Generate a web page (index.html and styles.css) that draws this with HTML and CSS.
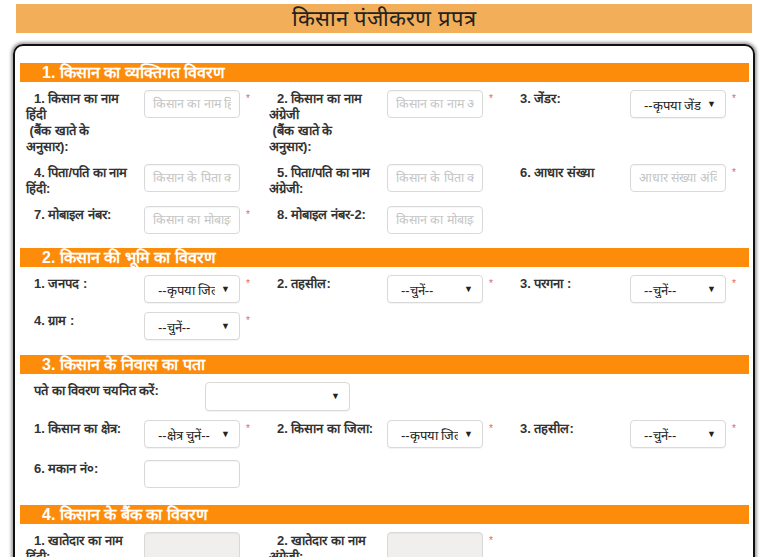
FILE: index.html
```html
<!DOCTYPE html>
<html lang="hi">
<head>
<meta charset="utf-8">
<title>किसान पंजीकरण प्रपत्र</title>
<link rel="stylesheet" href="styles.css">
</head>
<body>
<div class="title">किसान पंजीकरण प्रपत्र</div>
<div class="card">

  <div class="bar">1. किसान का व्यक्तिगत विवरण</div>
  <div class="row first">
    <div class="cell"><div class="lbl">1. किसान का नाम<br>हिंदी<br>&nbsp;(बैंक खाते के<br>अनुसार):</div><input class="inp" placeholder="किसान का नाम हिंदी में"><span class="req">*</span></div>
    <div class="cell"><div class="lbl">2. किसान का नाम<br>अंग्रेजी<br>&nbsp;(बैंक खाते के<br>अनुसार):</div><input class="inp" placeholder="किसान का नाम अंग्रेजी में"><span class="req">*</span></div>
    <div class="cell"><div class="lbl">3. जेंडर:</div><span class="sel"><select><option>--कृपया जेंडर चुनें--</option></select></span><span class="req">*</span></div>
  </div>
  <div class="row">
    <div class="cell"><div class="lbl">4. पिता/पति का नाम<br>हिंदी:</div><input class="inp" placeholder="किसान के पिता का नाम"></div>
    <div class="cell"><div class="lbl">5. पिता/पति का नाम<br>अंग्रेजी:</div><input class="inp" placeholder="किसान के पिता का नाम"></div>
    <div class="cell"><div class="lbl">6. आधार संख्या</div><input class="inp" placeholder="आधार संख्या अंकित करें"><span class="req">*</span></div>
  </div>
  <div class="row">
    <div class="cell"><div class="lbl">7. मोबाइल नंबर:</div><input class="inp" placeholder="किसान का मोबाइल नंबर"><span class="req">*</span></div>
    <div class="cell"><div class="lbl">8. मोबाइल नंबर-2:</div><input class="inp" placeholder="किसान का मोबाइल नंबर"></div>
    <div class="cell"></div>
  </div>

  <div class="bar next">2. किसान की भूमि का विवरण</div>
  <div class="row first">
    <div class="cell"><div class="lbl">1. जनपद :</div><span class="sel"><select><option>--कृपया जिला चुनें--</option></select></span><span class="req">*</span></div>
    <div class="cell"><div class="lbl">2. तहसील:</div><span class="sel"><select><option>--चुनें--</option></select></span><span class="req">*</span></div>
    <div class="cell"><div class="lbl">3. परगना :</div><span class="sel"><select><option>--चुनें--</option></select></span><span class="req">*</span></div>
  </div>
  <div class="row">
    <div class="cell"><div class="lbl">4. ग्राम :</div><span class="sel"><select><option>--चुनें--</option></select></span><span class="req">*</span></div>
    <div class="cell"></div>
    <div class="cell"></div>
  </div>

  <div class="bar next mid">3. किसान के निवास का पता</div>
  <div class="row first wide">
    <div class="cell"><div class="lbl lbl-wide">पते का विवरण चयनित करें:</div><span class="sel sel-wide"><select><option></option></select></span></div>
  </div>
  <div class="row">
    <div class="cell"><div class="lbl">1. किसान का क्षेत्र:</div><span class="sel"><select><option>--क्षेत्र चुनें--</option></select></span><span class="req">*</span></div>
    <div class="cell"><div class="lbl">2. किसान का जिला:</div><span class="sel"><select><option>--कृपया जिला चुनें--</option></select></span><span class="req">*</span></div>
    <div class="cell"><div class="lbl">3. तहसील:</div><span class="sel"><select><option>--चुनें--</option></select></span><span class="req">*</span></div>
  </div>
  <div class="row loose">
    <div class="cell"><div class="lbl">6. मकान नं०:</div><input class="inp"></div>
    <div class="cell"></div>
    <div class="cell"></div>
  </div>

  <div class="bar next far">4. किसान के बैंक का विवरण</div>
  <div class="row first">
    <div class="cell"><div class="lbl">1. खातेदार का नाम<br>हिंदी:</div><input class="inp" disabled></div>
    <div class="cell"><div class="lbl">2. खातेदार का नाम<br>अंग्रेजी:</div><input class="inp" disabled><span class="req">*</span></div>
    <div class="cell"></div>
  </div>
</div>
</body>
</html>
```

FILE: styles.css
```css
html, body {
  margin: 0;
  padding: 0;
  background: #ffffff;
  overflow: hidden;
}
body {
  font-family: "Liberation Sans", Arial, sans-serif;
  color: #333333;
}
.title {
  margin: 4px 16px 0 16px;
  height: 29px;
  line-height: 29px;
  background: #f2ae58;
  text-align: center;
  font-size: 22px;
  color: #222222;
}
.card {
  margin: 11px 13px 0 13px;
  border: 2.5px solid #111111;
  border-radius: 10px;
  box-shadow: 0 0 3px 2px rgba(0, 0, 0, 0.35);
  padding: 17px 4px 40px 5px;
  height: 600px;
}
.bar {
  height: 19px;
  line-height: 19px;
  background: #fd8c0b;
  color: #ffffff;
  font-weight: bold;
  font-size: 16px;
  padding-left: 22px;
}
.bar.next {
  margin-top: 14px;
}
.bar.mid {
  margin-top: 15px;
}
.bar.far {
  margin-top: 17px;
}
.row {
  display: grid;
  grid-template-columns: 243px 243px 243px;
  margin-left: 6px;
  margin-top: 9px;
}
.row.first {
  margin-top: 8px;
}
.row.loose {
  margin-top: 12px;
}
.row.wide {
  grid-template-columns: 500px;
}
.cell {
  display: flex;
  align-items: flex-start;
}
.lbl {
  width: 118px;
  flex: none;
  font-size: 13px;
  font-weight: bold;
  line-height: 16px;
  text-indent: 8px;
  white-space: nowrap;
  color: #333333;
  padding-top: 1px;
}
.lbl-wide {
  width: 179px;
}
.inp {
  box-sizing: border-box;
  width: 96px;
  height: 28px;
  border: 1px solid #d9d9d9;
  border-radius: 4px;
  padding: 0 8px;
  margin: 0;
  font-family: "Liberation Sans", Arial, sans-serif;
  font-size: 12.5px;
  color: #555555;
  background: #ffffff;
  box-shadow: inset 0 1px 1px rgba(0, 0, 0, 0.04);
}
.inp::placeholder {
  color: #c4c4c4;
}
.inp:disabled {
  background: #f1efed;
}
.sel {
  position: relative;
  display: block;
  width: 96px;
  height: 28px;
  flex: none;
}
.sel-wide {
  width: 145px;
  height: 29px;
}
.sel select {
  -webkit-appearance: none;
  appearance: none;
  box-sizing: border-box;
  width: 100%;
  height: 100%;
  border: 1px solid #d9d9d9;
  border-radius: 4px;
  background: #ffffff;
  padding: 2px 24px 0 13px;
  margin: 0;
  font-family: "Liberation Sans", Arial, sans-serif;
  font-size: 13px;
  color: #222222;
  box-shadow: 0 1px 1px rgba(0, 0, 0, 0.05);
}
.sel::after {
  content: "\25BC";
  position: absolute;
  right: 10px;
  top: 9px;
  font-size: 9px;
  line-height: 10px;
  color: #222222;
  pointer-events: none;
}
.req {
  color: #e06666;
  font-size: 10px;
  line-height: 10px;
  margin-left: 6px;
  margin-top: 4px;
}
```
